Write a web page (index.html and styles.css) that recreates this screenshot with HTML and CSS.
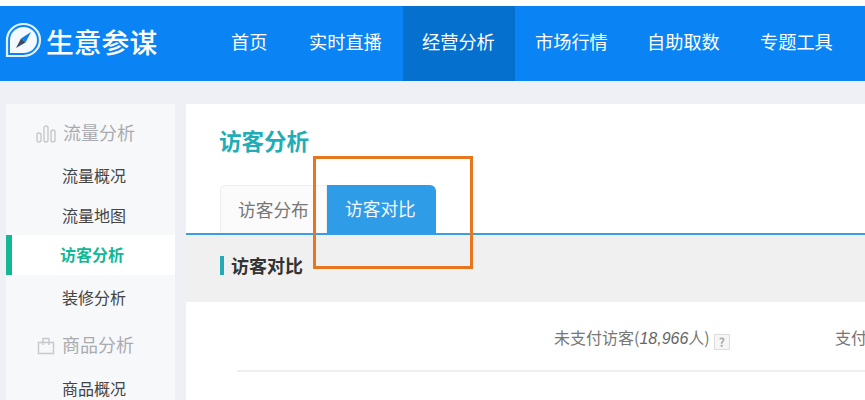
FILE: index.html
```html
<!DOCTYPE html>
<html lang="zh">
<head>
<meta charset="utf-8">
<title>生意参谋</title>
<link rel="stylesheet" href="styles.css">
</head>
<body>
<header class="header">
  <div class="logo">
    <svg class="logo-icon" width="37" height="36" viewBox="0 0 37 36">
      <path d="M2 34 L2 18 A16.5 16 0 1 1 18.5 34 Z" fill="#0a84f5" stroke="#e4f1fd" stroke-width="2.2"/>
      <path d="M5 31 L5 18 A13.5 13 0 1 1 18.5 31 Z" fill="#f4f9fe"/>
      <path d="M26 10 L20.5 20.5 L16 16.5 Z" fill="#0a7fe8"/>
      <path d="M11 26 L16 16.5 L20.5 20.5 Z" fill="#3b4a66"/>
    </svg>
    <span class="logo-text">生意参谋</span>
  </div>
  <nav class="nav">
    <a class="nav-item">首页</a>
    <a class="nav-item">实时直播</a>
    <a class="nav-item active">经营分析</a>
    <a class="nav-item">市场行情</a>
    <a class="nav-item">自助取数</a>
    <a class="nav-item">专题工具</a>
  </nav>
</header>
<div class="page">
  <aside class="sidebar">
    <div class="group">
      <svg width="20" height="18" viewBox="0 0 20 18" fill="none" stroke="#c6c8cc" stroke-width="1.4"><rect x="1" y="8" width="4" height="9" rx="2"/><rect x="8" y="1" width="4" height="16" rx="2"/><rect x="15" y="5" width="4" height="12" rx="2"/></svg>
      <span>流量分析</span>
    </div>
    <a class="side-item i1">流量概况</a>
    <a class="side-item i2">流量地图</a>
    <a class="side-item selected">访客分析</a>
    <a class="side-item i3">装修分析</a>
    <div class="group g2">
      <svg width="18" height="18" viewBox="0 0 18 18" fill="none" stroke="#c6c8cc" stroke-width="1.4"><path d="M1.5 5.5H16.5V16.5H1.5Z"/><path d="M6 8V1.5H12V8"/></svg>
      <span>商品分析</span>
    </div>
    <a class="side-item i4">商品概况</a>
  </aside>
  <main class="main">
    <h1 class="title">访客分析</h1>
    <div class="tabs">
      <div class="tab">访客分布</div>
      <div class="tab current">访客对比</div>
      <div class="callout"></div>
    </div>
    <div class="section"><span class="mark"></span>访客对比</div>
    <div class="columns">
      <span class="col-a">未支付访客(<em>18,966</em>人)<span class="help">?</span></span>
      <span class="col-b">支付访客</span>
    </div>
    <div class="rule"></div>
  </main>
</div>
</body>
</html>
```
FILE: styles.css
```css
* { box-sizing: border-box; }
html, body { margin: 0; height: 100%; }
body {
  width: 865px;
  height: 400px;
  overflow: hidden;
  background: #eef0f5;
  font-family: "Noto Sans CJK SC", "Liberation Sans", sans-serif;
  border-top: 6px solid #fdfdfb;
}
.header {
  height: 75px;
  background: #0a84f5;
  display: flex;
  align-items: stretch;
  color: #fff;
}
.logo {
  width: 211px;
  padding-left: 5px;
  display: flex;
  align-items: center;
  gap: 4px;
}
.logo-icon { margin-top: -8px; }
.logo-text { font-size: 27.8px; font-weight: 500; margin-top: -6px; line-height: 36px; white-space: nowrap; }
.nav { display: flex; }
.nav-item {
  width: 113px;
  padding-left: 20px;
  font-size: 18.2px;
  line-height: 70px;
  white-space: nowrap;
}
.nav-item:first-child { width: 78px; }
.nav-item.active { background: #0670cf; width: 112px; padding-left: 19px; }
.nav-item:nth-child(2) { width: 114px; }
.nav-item:nth-child(4) { width: 112px; }
.page {
  display: flex;
  padding: 23px 0 0 6px;
  gap: 11px;
  height: 319px;
  overflow: hidden;
}
.sidebar {
  width: 169px;
  height: 300px;
  background: #f7f8fa;
  flex: none;
  display: flex;
  flex-direction: column;
}
.group {
  display: flex;
  align-items: center;
  gap: 7px;
  padding-left: 30px;
  font-size: 18px;
  line-height: 26px;
  color: #a9abaf;
  margin-top: 15px;
}
.group svg { flex: none; margin-top: 3px; }
.g2 { margin-top: 22px; padding-left: 31px; }
.side-item {
  display: block;
  padding-left: 56px;
  font-size: 16px;
  line-height: 24px;
  color: #444;
}
.i1 { margin-top: 18px; }
.i2 { margin-top: 16px; }
.i3 { margin-top: 10px; }
.i4 { margin-top: 19px; }
.selected {
  margin-top: 8px;
  height: 40px;
  line-height: 38px;
  background: #fff;
  border-left: 6px solid #10b894;
  padding-left: 48px;
  color: #10b894;
  font-weight: 700;
}
.main {
  flex: 1;
  background: #fff;
  min-width: 0;
}
.title {
  margin: 0;
  padding: 19px 0 0 33px;
  font-size: 22.5px;
  line-height: 34px;
  font-weight: 700;
  color: #1fadb8;
}
.tabs {
  position: relative;
  display: flex;
  margin-top: 28px;
  padding-left: 34px;
  height: 50px;
  border-bottom: 2px solid #3a9ee6;
}
.tab {
  width: 107px;
  height: 48px;
  padding-left: 17px;
  font-size: 17.7px;
  line-height: 47px;
  color: #777;
  background: #fbfbfb;
  border: 1px solid #eee;
  border-bottom: 0;
  border-radius: 5px 0 0 0;
  white-space: nowrap;
}
.tab.current {
  width: 109px;
  height: 49px;
  padding-left: 18px;
  background: #2f9ce8;
  color: #f2f8fe;
  border: 0;
  border-radius: 0 6px 0 0;
  position: relative;
}
.callout {
  position: absolute;
  left: 127px;
  top: -29px;
  width: 160px;
  height: 113px;
  border: 3px solid #e8761f;
}
.section {
  height: 67px;
  background: #f0f0f0;
  padding: 0 0 7px 34px;
  display: flex;
  align-items: center;
  gap: 7px;
  font-size: 18px;
  font-weight: 700;
  color: #333;
}
.mark { width: 4px; height: 19px; background: #23aab5; }
.columns {
  position: relative;
  height: 68px;
  font-size: 16px;
  line-height: 70px;
  color: #777;
  white-space: nowrap;
}
.col-a { position: absolute; left: 368px; }
.col-b { position: absolute; left: 649px; }
.col-a em { font-family: "Liberation Sans", sans-serif; font-style: italic; font-size: 16px; color: #666; }
.help {
  display: inline-block;
  width: 16px;
  height: 16px;
  margin-left: 4px;
  border: 1px solid #ddd;
  background: #f6f6f6;
  color: #aaa;
  font-size: 12px;
  line-height: 14px;
  text-align: center;
  font-weight: 700;
  vertical-align: -3px;
}
.rule { margin-left: 51px; height: 2px; background: #eee; }
```
